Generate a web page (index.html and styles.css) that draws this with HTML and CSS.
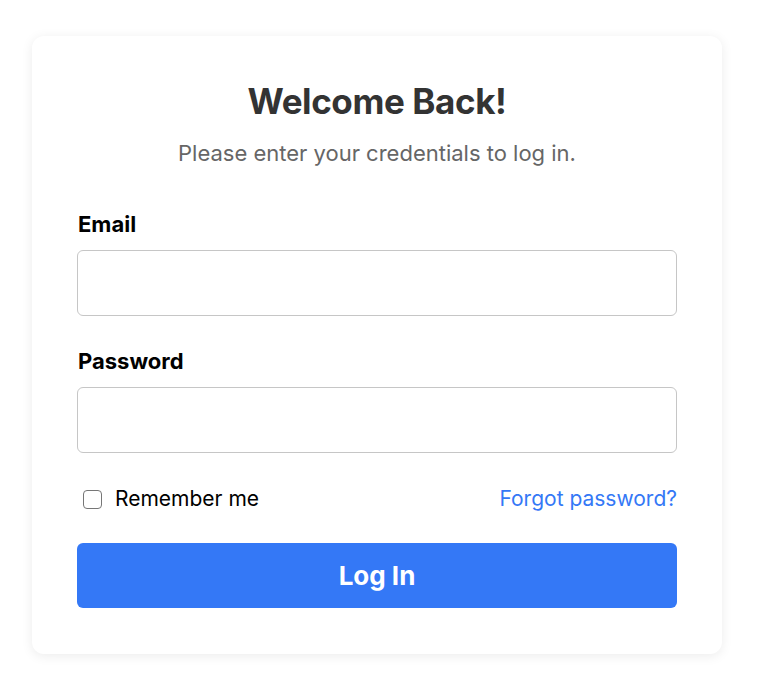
FILE: index.html
```html
<!DOCTYPE html>
<html lang="en">
<head>
<meta charset="utf-8">
<title>Login</title>
<link rel="stylesheet" href="styles.css">
</head>
<body>
<div class="card">
  <h1 class="title">Welcome Back!</h1>
  <p class="subtitle">Please enter your credentials to log in.</p>
  <form class="form">
    <label class="label" for="email">Email</label>
    <input class="input" id="email" type="email">
    <label class="label label-gap" for="password">Password</label>
    <input class="input" id="password" type="password">
    <div class="options">
      <label class="remember"><span class="box"></span>Remember me</label>
      <a class="forgot" href="#">Forgot password?</a>
    </div>
    <button class="btn" type="button">Log In</button>
  </form>
</div>
</body>
</html>
```

FILE: styles.css
```css
html, body {
  margin: 0;
  padding: 0;
  background: #ffffff;
}
body {
  font-family: Inter, "Liberation Sans", Arial, sans-serif;
  padding: 36px 40px 38px 32px;
}
.card {
  width: 600px;
  background: #ffffff;
  border-radius: 12px;
  box-shadow: 0 2px 12px rgba(0, 0, 0, 0.08);
  padding: 45px 45px 46px;
}
.title {
  margin: 0;
  font-size: 35px;
  line-height: 40px;
  font-weight: 700;
  color: #333333;
  text-align: center;
  letter-spacing: -0.4px;
}
.subtitle {
  margin: 19px 0 0;
  font-size: 22px;
  line-height: 26px;
  color: #666666;
  text-align: center;
}
.form {
  display: flex;
  flex-direction: column;
  margin-top: 45px;
}
.label {
  font-size: 22px;
  line-height: 26px;
  font-weight: 650;
  color: #000000;
  margin-bottom: 13px;
  padding-left: 1px;
}
.label-gap {
  margin-top: 32px;
}
.input {
  box-sizing: border-box;
  width: 600px;
  height: 66px;
  border: 1.5px solid #c6c6c6;
  border-radius: 6px;
  margin: 0;
  font-size: 20px;
  background: #ffffff;
}
.options {
  display: flex;
  justify-content: space-between;
  align-items: center;
  margin-top: 33px;
  height: 26px;
  font-size: 21px;
  line-height: 26px;
}
.remember {
  display: flex;
  align-items: center;
  color: #000000;
}
.box {
  box-sizing: border-box;
  width: 19px;
  height: 19px;
  border: 1.5px solid #767676;
  border-radius: 4px;
  margin-left: 6px;
  margin-right: 13px;
}
.forgot {
  color: #3478f6;
  text-decoration: none;
}
.btn {
  margin-top: 31px;
  height: 65px;
  border: none;
  border-radius: 6px;
  background: #3478f6;
  color: #ffffff;
  font-family: Inter, "Liberation Sans", Arial, sans-serif;
  font-size: 26px;
  font-weight: 700;
  padding: 0;
}
```
